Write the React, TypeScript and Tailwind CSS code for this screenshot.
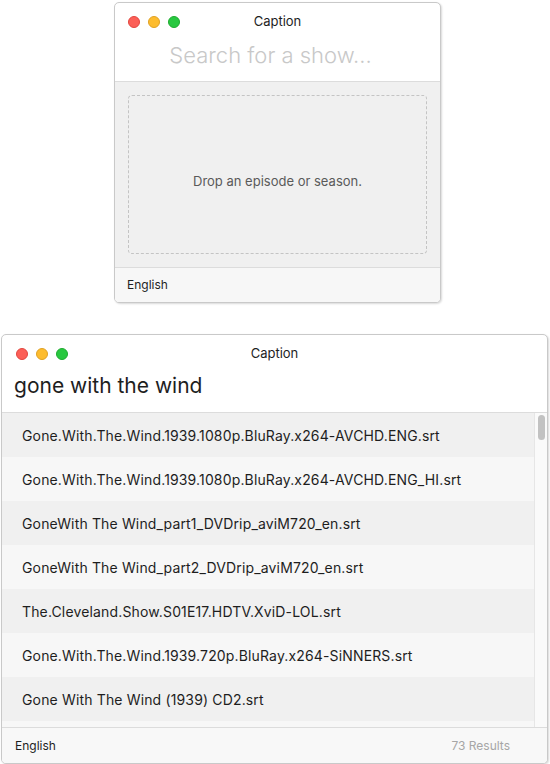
import React from 'react';

const FILES = [
  'Gone.With.The.Wind.1939.1080p.BluRay.x264-AVCHD.ENG.srt',
  'Gone.With.The.Wind.1939.1080p.BluRay.x264-AVCHD.ENG_HI.srt',
  'GoneWith The Wind_part1_DVDrip_aviM720_en.srt',
  'GoneWith The Wind_part2_DVDrip_aviM720_en.srt',
  'The.Cleveland.Show.S01E17.HDTV.XviD-LOL.srt',
  'Gone.With.The.Wind.1939.720p.BluRay.x264-SiNNERS.srt',
  'Gone With The Wind (1939) CD2.srt',
  '',
];

function TrafficLights() {
  return (
    <div className="flex items-center gap-[8px]">
      <span className="h-[12px] w-[12px] rounded-full bg-[#fc5f57] border border-[#e2463f]" />
      <span className="h-[12px] w-[12px] rounded-full bg-[#fdbc2e] border border-[#e0a123]" />
      <span className="h-[12px] w-[12px] rounded-full bg-[#28c840] border border-[#1eab2f]" />
    </div>
  );
}

function TitleBar({ padLeft }: { padLeft: string }) {
  return (
    <div className={`relative flex h-[37px] items-center ${padLeft}`}>
      <TrafficLights />
      <span className="absolute inset-x-0 text-center text-[13px] text-[#1e1e1e] pointer-events-none">Caption</span>
    </div>
  );
}

export default function App() {
  return (
    <div className="flex flex-col bg-white pt-[2px] min-h-[764px]" style={{ fontFamily: 'Inter, "Noto Sans", sans-serif' }}>
      {/* empty state window */}
      <div className="ml-[114px] flex h-[301px] w-[327px] flex-col overflow-hidden rounded-[5px] border border-[#c9c9c9] bg-white shadow-[1px_1px_2px_rgba(0,0,0,0.15)]">
        <TitleBar padLeft="pl-[13px]" />
        <div className="flex h-[42px] items-start justify-center border-b border-[#dcdcdc] pr-[14px]">
          <span className="text-[22px] font-light leading-[30px] text-[#c8c8c8]">Search for a show...</span>
        </div>
        <div className="flex-1 bg-[#f0f0f0] p-[13px]">
          <div className="flex h-full items-center justify-center rounded-[4px] border border-dashed border-[#c4c4c4] pt-[15px]">
            <span className="text-[13px] text-[#5a5a5a]">Drop an episode or season.</span>
          </div>
        </div>
        <div className="flex h-[35px] items-center border-t border-[#dcdcdc] bg-[#f7f7f7] px-[12px]">
          <span className="text-[12px] text-[#1e1e1e]">English</span>
        </div>
      </div>

      {/* results window */}
      <div className="ml-[1px] mt-[31px] flex h-[430px] w-[547px] flex-col overflow-hidden rounded-[5px] border border-[#c9c9c9] bg-white shadow-[1px_1px_2px_rgba(0,0,0,0.15)]">
        <TitleBar padLeft="pl-[14px]" />
        <div className="flex h-[41px] items-start border-b border-[#dcdcdc] px-[12px]">
          <span className="text-[21px] leading-[28px] text-[#1e1e1e]">gone with the wind</span>
        </div>
        <div className="flex flex-1 overflow-hidden">
          <div className="flex-1 overflow-hidden">
            {FILES.map((f, i) => (
              <div
                key={i}
                className={`flex h-[44px] items-center pl-[20px] text-[14px] tracking-[0.15px] text-[#1e1e1e] ${i % 2 === 0 ? 'bg-[#f0f0f0]' : 'bg-[#f7f7f7]'}`}
              >
                {f}
              </div>
            ))}
          </div>
          <div className="w-[13px] border-l border-[#e6e6e6] bg-[#fafafa] pl-[3px] pt-[2px]">
            <div className="h-[25px] w-[7px] rounded-full bg-[#c2c2c2]" />
          </div>
        </div>
        <div className="flex h-[36px] items-center justify-between border-t border-[#dcdcdc] bg-[#f8f8f8] pl-[13px] pr-[37px]">
          <span className="text-[12px] text-[#1e1e1e]">English</span>
          <span className="text-[12px] text-[#a6a6a6]">73 Results</span>
        </div>
      </div>
    </div>
  );
}
